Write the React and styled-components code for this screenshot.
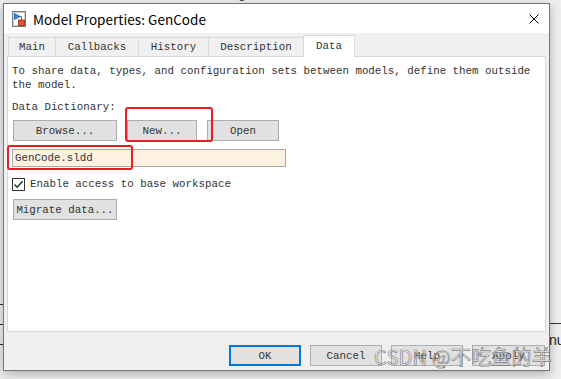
import React from 'react';
import styled, { createGlobalStyle } from 'styled-components';

const Global = createGlobalStyle`
  html, body { margin: 0; padding: 0; }
  body {
    width: 561px; height: 379px; overflow: hidden;
    background: #eeeeee;
    font-family: "Liberation Mono", monospace;
  }
  * { box-sizing: border-box; }
`;

const Desktop = styled.div`
  position: relative;
  width: 561px;
  height: 379px;
  overflow: hidden;
  background: #efefef;
`;

const BackText = styled.div`
  position: absolute;
  left: ${p => p.$x}px;
  top: ${p => p.$y}px;
  font-family: "Liberation Sans", sans-serif;
  font-size: ${p => p.$size || 13}px;
  color: #1a1a1a;
  white-space: nowrap;
`;

const BackLine = styled.div`
  position: absolute;
  left: ${p => p.$x}px;
  top: ${p => p.$y}px;
  width: ${p => p.$w}px;
  height: 1px;
  background: ${p => p.$c || '#444'};
`;

const Dialog = styled.div`
  position: absolute;
  left: 3px;
  top: 3px;
  width: 547px;
  height: 368px;
  border: 1px solid #767676;
  background: #f0f0f0;
  display: flex;
  flex-direction: column;
  box-shadow: 0 3px 10px rgba(0, 0, 0, 0.28);
`;

const TitleBar = styled.div`
  height: 29px;
  flex: none;
  background: #ffffff;
  display: flex;
  align-items: center;
  padding: 0 9px 0 8px;
`;

const Title = styled.div`
  margin-left: 7px;
  flex: 1;
  font-family: "Noto Sans CJK SC", "Liberation Sans", sans-serif;
  font-size: 13.5px;
  color: #000;
  letter-spacing: 0.05px;
`;

const CloseBtn = styled.div`
  width: 10px;
  height: 10px;
  margin-right: 1px;
  display: flex;
`;

const Body = styled.div`
  flex: 1;
  display: flex;
  flex-direction: column;
  padding: 2px 3px 0 3px;
`;

const TabRow = styled.div`
  height: 22px;
  flex: none;
  display: flex;
  align-items: flex-end;
  padding-left: 1px;
`;

const Tab = styled.div`
  position: relative;
  width: ${p => p.$w}px;
  height: ${p => (p.$active ? 22 : 20)}px;
  margin-left: -1px;
  border: 1px solid #d9d9d9;
  border-bottom: ${p => (p.$active ? 'none' : '1px solid #d9d9d9')};
  background: ${p => (p.$active ? '#ffffff' : '#f0f0f0')};
  z-index: ${p => (p.$active ? 2 : 0)};
  display: flex;
  align-items: center;
  justify-content: center;
  padding-bottom: ${p => (p.$active ? 2 : 0)}px;
  font-size: 10.8px;
  color: #333;
  &:first-child { margin-left: 0; }
`;

const Panel = styled.div`
  position: relative;
  height: 276px;
  flex: none;
  margin-top: -1px;
  background: #ffffff;
  border: 1px solid #d9d9d9;
  padding: 7px 4px 0 4px;
  display: flex;
  flex-direction: column;
  align-items: flex-start;
  font-size: 10.8px;
  color: #333;
`;

const Para = styled.div`
  line-height: 14px;
  white-space: nowrap;
`;

const Label = styled.div`
  margin-top: 8px;
  line-height: 14px;
`;

const ButtonRow = styled.div`
  margin-top: 6px;
  display: flex;
  gap: 10px;
  padding-left: 1px;
`;

const Button = styled.div`
  width: ${p => p.$w}px;
  height: 21px;
  background: #e1e1e1;
  border: ${p => (p.$default ? '2px solid #0078d7' : '1px solid #adadad')};
  display: flex;
  align-items: center;
  justify-content: center;
  font-family: "Liberation Mono", monospace;
  font-size: 10.8px;
  color: #333;
  margin-top: ${p => p.$mt || 0}px;
  margin-left: ${p => p.$ml || 0}px;
`;

const TextField = styled.div`
  margin-top: 8px;
  width: 274px;
  height: 18px;
  background: #fdf1e0;
  border: 1px solid #a8a8a8;
  padding-left: 2px;
  display: flex;
  align-items: center;
  font-size: 10.8px;
  color: #333;
`;

const CheckRow = styled.div`
  margin-top: 10px;
  height: 14px;
  display: flex;
  align-items: center;
  gap: 5px;
`;

const CheckBox = styled.div`
  width: 13px;
  height: 13px;
  border: 1px solid #333;
  background: #fff;
  display: flex;
  align-items: center;
  justify-content: center;
`;

const Marker = styled.div`
  position: absolute;
  left: ${p => p.$x}px;
  top: ${p => p.$y}px;
  width: ${p => p.$w}px;
  height: ${p => p.$h}px;
  border: 2px solid #ec1c24;
  border-radius: 3px;
  pointer-events: none;
`;

const Footer = styled.div`
  flex: 1;
  display: flex;
  justify-content: flex-end;
  align-items: flex-start;
  gap: 9px;
  padding: 13px 1px 0 0;
`;

const Watermark = styled.div`
  position: absolute;
  left: 374px;
  top: 343px;
  font-family: "Noto Sans CJK SC", "Liberation Sans", sans-serif;
  font-size: 20px;
  line-height: 28px;
  color: rgba(255, 255, 255, 0.55);
  -webkit-text-stroke: 0.7px rgba(100, 100, 100, 0.8);
  white-space: nowrap;
  letter-spacing: 0.2px;
`;

const ModelIcon = () => (
  <svg width="14" height="16" viewBox="0 0 14 16">
    <rect x="0.5" y="0.5" width="13" height="15" fill="#f4f4f4" stroke="#7a7a7a" />
    <rect x="1.5" y="1.5" width="11" height="13" fill="#ffffff" stroke="#d0d0d0" />
    <path d="M2.5 2.5 L8 5.5 L2.5 8.5 Z" fill="#3a8fd8" stroke="#1e5fa8" strokeWidth="0.8" />
    <path d="M6.5 5.5 H9.5 V9" fill="none" stroke="#555" strokeWidth="0.9" />
    <rect x="6.5" y="9" width="6" height="5.5" fill="#e5532d" stroke="#8a2a10" strokeWidth="0.8" />
  </svg>
);

const CloseIcon = () => (
  <svg width="10" height="10" viewBox="0 0 10 10">
    <path d="M0.5 0.5 L9.5 9.5 M9.5 0.5 L0.5 9.5" stroke="#000" strokeWidth="1" />
  </svg>
);

const CheckIcon = () => (
  <svg width="11" height="11" viewBox="0 0 11 11">
    <path d="M1.5 5.5 L4.2 8.3 L9.5 2.2" fill="none" stroke="#222" strokeWidth="1.3" />
  </svg>
);

const tabs = [
  { label: 'Main', w: 48 },
  { label: 'Callbacks', w: 84 },
  { label: 'History', w: 71 },
  { label: 'Description', w: 96 },
  { label: 'Data', w: 52, active: true },
];

export default function App() {
  return (
    <>
      <Global />
      <Desktop>
        <BackText $x={205} $y={-14} $size={13}>Settings</BackText>
        <BackLine $x={550} $y={323} $w={11} $c="#333" />
        <BackText $x={549} $y={332} $size={14}>nu</BackText>
        <BackLine $x={0} $y={304} $w={4} $c="#333" />
        <BackLine $x={0} $y={324} $w={4} $c="#333" />
        <BackLine $x={0} $y={344} $w={4} $c="#333" />

        <Dialog>
          <TitleBar>
            <ModelIcon />
            <Title>Model Properties: GenCode</Title>
            <CloseBtn><CloseIcon /></CloseBtn>
          </TitleBar>
          <Body>
            <TabRow>
              {tabs.map(t => (
                <Tab key={t.label} $w={t.w} $active={t.active}>{t.label}</Tab>
              ))}
            </TabRow>
            <Panel>
              <Para>
                To share data, types, and configuration sets between models, define them outside
                <br />
                the model.
              </Para>
              <Label>Data Dictionary:</Label>
              <ButtonRow>
                <Button $w={104}>Browse...</Button>
                <Button $w={70}>New...</Button>
                <Button $w={72}>Open</Button>
              </ButtonRow>
              <TextField>GenCode.sldd</TextField>
              <CheckRow>
                <CheckBox><CheckIcon /></CheckBox>
                <span>Enable access to base workspace</span>
              </CheckRow>
              <Button $w={104} $mt={8} $ml={1}>Migrate data...</Button>
              <Marker $x={117} $y={50} $w={88} $h={35} />
              <Marker $x={-1} $y={88} $w={126} $h={25} />
            </Panel>
            <Footer>
              <Button $w={72} $default>OK</Button>
              <Button $w={72}>Cancel</Button>
              <Button $w={72}>Help</Button>
              <Button $w={73}>Apply</Button>
            </Footer>
          </Body>
        </Dialog>
        <Watermark>CSDN @不吃鱼的羊</Watermark>
      </Desktop>
    </>
  );
}
